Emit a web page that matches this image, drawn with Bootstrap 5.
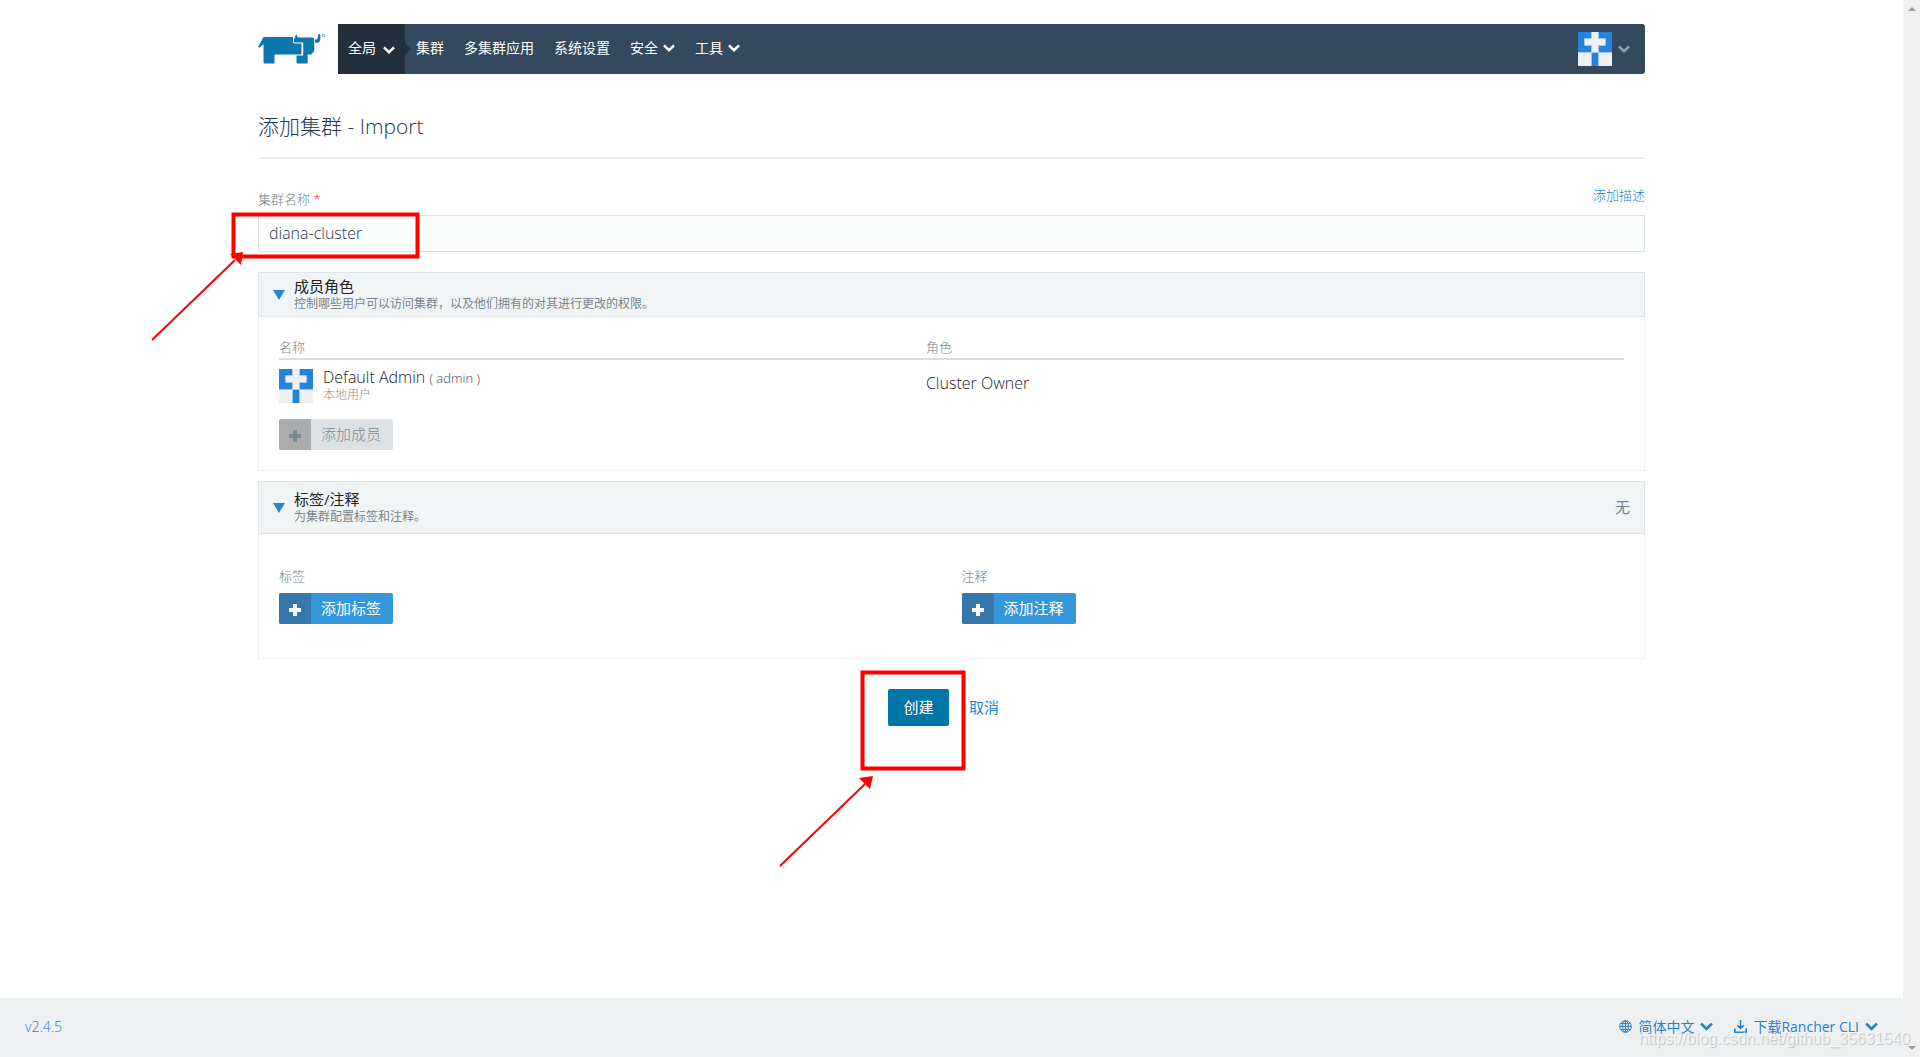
<!DOCTYPE html>
<html lang="zh-CN">
<head>
<meta charset="utf-8">
<meta name="viewport" content="width=device-width, initial-scale=1">
<title>添加集群 - Import</title>
<link href="https://cdn.jsdelivr.net/npm/bootstrap@5.3.0/dist/css/bootstrap.min.css" rel="stylesheet">
<style>
  :root { --ink: #34495e; --link: #2583cc; --muted: #78848c; --line: #dce4e6; --pale: #ecf0f1; }
  body { font-family: "Open Sans", "Noto Sans CJK SC", sans-serif; font-weight: 300; font-size: 15px; line-height: 20px; color: #222; background: #fff; }
  a { color: var(--link); text-decoration: none; }
  svg { display: block; flex: none; }
  .page-wrap { width: 100%; max-width: 1387px; }
  .top-bar { padding-top: 24px; }
  .brand-box { width: 80px; }
  .main-nav { background: var(--ink); height: 50px; border-radius: 0 3px 3px 0; padding-right: 15px; font-size: 14px; }
  .nav-item-btn { border: 0; background: none; color: #fff; padding: 0 10px 2px; height: 50px; gap: 5px; font-weight: 400; }
  .nav-scope { background: #22303d; width: 67px; gap: 7px; margin-right: 1px; }
  .nav-scope::after { content: ""; position: absolute; left: 100%; top: 19px; border: 6px solid transparent; border-left-color: #22303d; border-right: 0; }
  .nav-user { padding: 0; gap: 6px; }
  .nav-user .caret { color: #93a0aa; }
  .page-title { font-size: 21px; line-height: 30px; font-weight: 300; color: #24394e; padding: 37px 0 16px; border-bottom: 2px solid var(--pale); margin: 0; }
  .field-label { font-size: 13px; line-height: 20px; color: var(--muted); }
  .field-row { padding-top: 26px; padding-bottom: 6px; }
  .desc-link { font-size: 13px; }
  .name-input { border: 1px solid var(--line); border-radius: 0; background: #fbfdfc; color: #24394e; height: 37px; padding: 0 10px 2px; font-size: 16px; font-weight: 300; }
  .fold-head { background: #f0f4f5; border: 1px solid var(--line); padding: 5px 14px 4px; gap: 9px; color: #222; width: 100%; }
  .fold-head-tall { padding: 9px 14px 8px; }
  .fold-title { font-size: 15px; line-height: 17px; }
  .fold-sub { font-size: 12px; line-height: 17px; color: var(--muted); }
  .fold-none { color: var(--muted); padding-bottom: 3px; }
  .fold-next { margin-top: 10px; }
  .fold-body { border: 1px solid var(--pale); border-top: 0; padding: 20px 20px; }
  .member-table { font-size: 16px; }
  .member-table th { font-size: 13px; font-weight: 300; color: var(--muted); padding: 0 0 1px; border-bottom: 2px solid #ddd; }
  .member-table td { padding: 9px 0 0; vertical-align: top; }
  .col-name { width: 48.1%; }
  .user-text { line-height: 17px; gap: 10px; }
  .login-name { font-size: 13px; line-height: 1; color: #444; }
  .origin-text { font-size: 12px; line-height: 17px; color: #8b9094; }
  .add-btn { border: 0; padding: 0; height: 31px; border-radius: 2px; overflow: hidden; background: #3497da; color: #fff; font-size: 15px; font-weight: 400; }
  .add-btn .ico { width: 32px; height: 31px; background: #3477a8; padding: 3px 0 0; }
  .add-btn .txt { padding: 0 12px 2px 10px; }
  .add-btn:disabled { background: #dde1e4; color: #7c8a93; font-weight: 300; }
  .add-btn:disabled .ico { background: #a9abac; }
  .labels-body { padding: 32px 20px 34px; }
  .labels-row { --bs-gutter-x: 20px; }
  .labels-row .field-label { margin-bottom: 7px; }
  .form-end { padding-top: 30px; }
  .create-btn { background: #0075a8; color: #fff; border: 0; border-radius: 2px; width: 61px; height: 37px; padding: 0 0 2px; font-size: 15px; font-weight: 400; }
  .cancel-btn { border: 0; background: none; color: var(--link); padding: 0 16px 2px; height: 37px; }
  .foot { background: var(--pale); height: 59px; padding: 0 25px 2px; font-size: 14px; }
  .foot-link { gap: 6px; border: 0; background: none; padding: 0; color: var(--link); }
  .foot-next { margin-left: 21px; }
  .rail { width: 17px; background: #f0f0f0; padding: 7px 0; }
  .overlay { position: absolute; left: 0; top: 0; pointer-events: none; }
  .stamp { position: absolute; right: 10px; bottom: 8px; font: 400 16px/20px "Liberation Sans", sans-serif; color: rgba(255,255,255,.6); text-shadow: 1px 1px 1px rgba(0,0,0,.2); pointer-events: none; }
</style>
</head>
<body>
<svg width="0" height="0" class="position-absolute" aria-hidden="true">
  <symbol id="chev" viewBox="0 0 12 8"><path d="M1 1.300 6 6.200l5-4.900" fill="none" stroke="currentColor" stroke-width="2.500"/></symbol>
  <symbol id="plus" viewBox="0 0 12 12"><path d="M6 0v12M0 6h12" stroke="currentColor" stroke-width="4"/></symbol>
  <symbol id="tri" viewBox="0 0 12 10"><path d="M0 0h12L6 10z" fill="#2489d3"/></symbol>
  <symbol id="face" viewBox="0 0 34 34"><path fill="#efefef" d="M0 0h34v34H0z"/><path fill="#2583db" d="M0 0h13v7H7v6h6v7H0zM34 0H21v7h6v6h-6v7h13zM13 20h8v14h-8z"/><path fill="none" stroke="#9cc6ed" d="M13.500 0v6.500h-7v7h7v6M20.500 0v6.500h7v7h-7v6M0 20.500h34M13.500 21v13M20.500 21v13"/><path fill="#efefef" d="M14 13h6v7h-6z"/></symbol>
</svg>
<div class="d-flex min-vh-100 position-relative">
  <div class="d-flex flex-column flex-grow-1">
    <div class="page-wrap mx-auto">
      <header class="top-bar d-flex">
        <a href="#" class="brand-box d-flex align-items-center" aria-label="Rancher">
          <svg width="68" height="32" viewBox="0 0 68 32" fill="#0c77ac">
            <path d="M5.500 4H35v4.500c0 1.200 .8 2 2 2h6.500V20c0 1-.5 1.500-1.500 1.500H16.500V29c0 1-.4 1.500-1.500 1.500H7c-1 0-1.500-.5-1.500-1.500V11L2 14.500 0 14z"/>
            <path d="M38.500 22.500h6.800V21h4.400v8c0 1-.5 1.500-1.500 1.500h-8.200c-1 0-1.500-.5-1.500-1.500z"/>
            <path d="M36 9.300V6.500l2.300-5.500 1.500 3.500H54c1.500 0 2.200 .8 2.200 2.500v11l-2.800 3.500h-8.200v-12H37.200c-.8 0-1.200-.2-1.200-.7z"/>
            <path d="M61 .8c.7 0 1.100 .7 1.300 2 .5 3.800-.4 7-2.800 7H57V6.600c1.800 0 2.500-.6 2.800-1.900.2-1.300 .3-3.900 1.200-3.900z"/>
            <circle cx="65.600" cy="2.500" r="1.300" fill="none" stroke="#4d9cc4"/>
          </svg>
        </a>
        <nav class="main-nav d-flex align-items-center flex-grow-1">
          <button class="nav-item-btn nav-scope d-flex align-items-center position-relative">全局<svg class="mt-1" width="12" height="8"><use href="#chev"/></svg></button>
          <a href="#" class="nav-item-btn d-flex align-items-center">集群</a>
          <a href="#" class="nav-item-btn d-flex align-items-center">多集群应用</a>
          <a href="#" class="nav-item-btn d-flex align-items-center">系统设置</a>
          <button class="nav-item-btn d-flex align-items-center">安全<svg width="12" height="8"><use href="#chev"/></svg></button>
          <button class="nav-item-btn d-flex align-items-center">工具<svg width="12" height="8"><use href="#chev"/></svg></button>
          <button class="nav-item-btn nav-user d-flex align-items-center ms-auto" aria-label="用户"><svg width="34" height="34"><use href="#face"/></svg><svg class="caret" width="12" height="8"><use href="#chev"/></svg></button>
        </nav>
      </header>
      <main>
        <h1 class="page-title">添加集群 - Import</h1>
        <form>
          <div class="field-row d-flex justify-content-between">
            <label for="cname" class="field-label pt-1">集群名称 <span class="text-danger">*</span></label>
            <a href="#" class="desc-link">添加描述</a>
          </div>
          <input id="cname" class="name-input w-100 d-block" type="text" value="diana-cluster">

          <section class="mt-3 pt-1">
            <button type="button" class="fold-head d-flex align-items-center text-start">
              <svg width="12" height="10"><use href="#tri"/></svg>
              <span class="d-flex flex-column"><span class="fold-title">成员角色</span><span class="fold-sub">控制哪些用户可以访问集群，以及他们拥有的对其进行更改的权限。</span></span>
            </button>
            <div class="fold-body">
              <table class="member-table w-100">
                <thead><tr><th class="col-name">名称</th><th>角色</th></tr></thead>
                <tbody><tr>
                  <td><div class="user-text d-flex"><svg width="34" height="34"><use href="#face"/></svg>
                    <div><div>Default Admin <span class="login-name">( admin )</span></div><div class="origin-text">本地用户</div></div></div></td>
                  <td><div class="pt-1">Cluster Owner</div></td>
                </tr></tbody>
              </table>
              <button type="button" class="add-btn d-flex align-items-center mt-3" disabled><span class="ico d-flex align-items-center justify-content-center"><svg width="12" height="12"><use href="#plus"/></svg></span><span class="txt">添加成员</span></button>
            </div>
          </section>

          <section class="fold-next">
            <button type="button" class="fold-head fold-head-tall d-flex align-items-center text-start">
              <svg width="12" height="10"><use href="#tri"/></svg>
              <span class="d-flex flex-column"><span class="fold-title">标签/注释</span><span class="fold-sub">为集群配置标签和注释。</span></span>
              <span class="fold-none ms-auto">无</span>
            </button>
            <div class="fold-body labels-body">
              <div class="row labels-row">
                <div class="col-6"><div class="field-label">标签</div>
                  <button type="button" class="add-btn d-flex align-items-center"><span class="ico d-flex align-items-center justify-content-center"><svg width="12" height="12"><use href="#plus"/></svg></span><span class="txt">添加标签</span></button></div>
                <div class="col-6"><div class="field-label">注释</div>
                  <button type="button" class="add-btn d-flex align-items-center"><span class="ico d-flex align-items-center justify-content-center"><svg width="12" height="12"><use href="#plus"/></svg></span><span class="txt">添加注释</span></button></div>
              </div>
            </div>
          </section>
          <div class="form-end d-flex justify-content-center gap-1">
            <button type="submit" class="create-btn">创建</button>
            <button type="button" class="cancel-btn">取消</button>
          </div>
        </form>
      </main>
    </div>
    <footer class="foot mt-auto d-flex align-items-center">
      <a href="#">v2.4.5</a>
      <button class="foot-link d-flex align-items-center ms-auto">
        <svg width="13" height="13" viewBox="0 0 13 13" fill="none" stroke="currentColor"><circle cx="6.500" cy="6.500" r="5.800"/><ellipse cx="6.500" cy="6.500" rx="2.900" ry="5.800"/><path d="M6.500 .7v11.600M.7 6.500h11.600M1.600 3.600h9.800M1.600 9.400h9.800"/></svg>
        简体中文<svg width="13" height="9"><use href="#chev"/></svg></button>
      <button class="foot-link foot-next d-flex align-items-center">
        <svg width="13" height="13" viewBox="0 0 13 13" fill="none" stroke="currentColor" stroke-width="1.600"><path d="M6.500 0v8M3.300 5.200l3.200 3.200 3.200-3.200M.8 8.500v3.700h11.400V8.500"/></svg>
        下载Rancher CLI<svg width="13" height="9"><use href="#chev"/></svg></button>
    </footer>
  </div>
  <div class="rail d-flex flex-column justify-content-between align-items-center" aria-hidden="true">
    <svg width="8" height="4"><path d="M0 4h8L4 0z" fill="#9a9a9a"/></svg>
    <svg width="8" height="4"><path d="M0 0h8L4 4z" fill="#9a9a9a"/></svg>
  </div>
  <svg class="overlay" width="1100" height="900" aria-hidden="true">
    <g fill="none" stroke="#f00" stroke-width="4"><path d="M233.500 214.500h184v42h-184zM862.500 672.500h101v96h-101z"/><path stroke-width="2" d="M152 340l83-80M780 866l85-82"/></g>
    <path fill="#f00" d="M243 252l-13 2 11 11zM873 776l-14 2 11 11z"/>
  </svg>
  <div class="stamp">https://blog.csdn.net/github_35631540</div>
</div>
<script src="https://cdn.jsdelivr.net/npm/bootstrap@5.3.0/dist/js/bootstrap.bundle.min.js"></script>
</body>
</html>
